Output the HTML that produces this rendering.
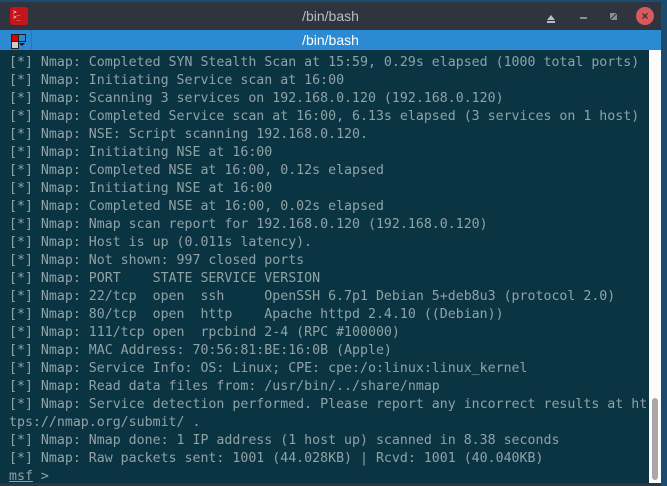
<!DOCTYPE html>
<html><head><style>
body{margin:0;width:667px;height:486px;background:#1c4b72;overflow:hidden;position:relative;font-family:"Liberation Sans",sans-serif}
.win{position:absolute;left:0;top:2px;width:661px;height:484px;background:#2f343f}
.title{position:absolute;top:0;left:0;width:661px;height:28px;color:#b8bcc4;font-size:14px;text-align:center;line-height:28px}
.tab{position:absolute;top:28px;left:0;width:661px;height:20px;background:#2b8ad2;color:#fff;font-size:14px;text-align:center;line-height:20px}
.tabsep{position:absolute;left:31px;top:28px;width:1px;height:20px;background:#2677b3}
.term{position:absolute;top:48px;left:0;width:649px;height:433px;background:#0b3443}
.sb{position:absolute;top:48px;left:649px;width:12px;height:433px;background:#fcfcfc}
.thumb{position:absolute;left:3px;top:348px;width:6px;height:82px;background:#a8a8ab;border-radius:3px}
pre{margin:0;position:absolute;left:9px;top:4px;font-family:"DejaVu Sans Mono","Liberation Mono",monospace;font-size:13.25px;line-height:18px;color:#8fa2a6}
</style></head><body>
<div class="win">
<div class="title">/bin/bash</div>
<div style="position:absolute;left:10px;top:5px;width:18px;height:18px;border-radius:3px;background:#c3161c"><div style="color:#fff;font-size:6px;line-height:5px;padding:3px 0 0 3px;font-family:monospace">&gt;_<br>&gt;_</div></div>
<div style="position:absolute;left:547px;top:13px;width:0;height:0;border-left:4px solid transparent;border-right:4px solid transparent;border-bottom:5px solid #b8bcc4"></div>
<div style="position:absolute;left:547px;top:19px;width:8px;height:2px;background:#b8bcc4"></div>
<div style="position:absolute;left:580px;top:15px;width:7px;height:2px;background:#8a8e96"></div>
<div style="position:absolute;left:610px;top:11px;width:7px;height:7px;background:linear-gradient(135deg,#8a8e96 45%,transparent 45%,transparent 55%,#8a8e96 55%)"></div>
<div style="position:absolute;left:636px;top:5px;width:18px;height:18px;border-radius:50%;background:#d9595d;color:#2f343f;font-size:12px;line-height:18px;text-align:center;font-weight:bold">×</div>
<div class="tab">/bin/bash</div>
<div class="tabsep"></div>
<div style="position:absolute;left:11px;top:32px;width:6px;height:6px;background:#d00;border:1px solid #222"></div>
<div style="position:absolute;left:18px;top:32px;width:6px;height:6px;background:#2b8ad2;border:1px solid #222"></div>
<div style="position:absolute;left:11px;top:39px;width:6px;height:6px;background:#ccc;border:1px solid #222"></div>
<div style="position:absolute;left:19px;top:41px;border-left:3px solid transparent;border-right:3px solid transparent;border-top:3px solid #111"></div>
<div class="term"><pre>[*] Nmap: Completed SYN Stealth Scan at 15:59, 0.29s elapsed (1000 total ports)
[*] Nmap: Initiating Service scan at 16:00
[*] Nmap: Scanning 3 services on 192.168.0.120 (192.168.0.120)
[*] Nmap: Completed Service scan at 16:00, 6.13s elapsed (3 services on 1 host)
[*] Nmap: NSE: Script scanning 192.168.0.120.
[*] Nmap: Initiating NSE at 16:00
[*] Nmap: Completed NSE at 16:00, 0.12s elapsed
[*] Nmap: Initiating NSE at 16:00
[*] Nmap: Completed NSE at 16:00, 0.02s elapsed
[*] Nmap: Nmap scan report for 192.168.0.120 (192.168.0.120)
[*] Nmap: Host is up (0.011s latency).
[*] Nmap: Not shown: 997 closed ports
[*] Nmap: PORT    STATE SERVICE VERSION
[*] Nmap: 22/tcp  open  ssh     OpenSSH 6.7p1 Debian 5+deb8u3 (protocol 2.0)
[*] Nmap: 80/tcp  open  http    Apache httpd 2.4.10 ((Debian))
[*] Nmap: 111/tcp open  rpcbind 2-4 (RPC #100000)
[*] Nmap: MAC Address: 70:56:81:BE:16:0B (Apple)
[*] Nmap: Service Info: OS: Linux; CPE: cpe:/o:linux:linux_kernel
[*] Nmap: Read data files from: /usr/bin/../share/nmap
[*] Nmap: Service detection performed. Please report any incorrect results at ht
tps://nmap.org/submit/ .
[*] Nmap: Nmap done: 1 IP address (1 host up) scanned in 8.38 seconds
[*] Nmap: Raw packets sent: 1001 (44.028KB) | Rcvd: 1001 (40.040KB)
<u>msf</u> &gt;</pre></div>
<div class="sb"><div class="thumb"></div></div>
</div>
</body></html>
